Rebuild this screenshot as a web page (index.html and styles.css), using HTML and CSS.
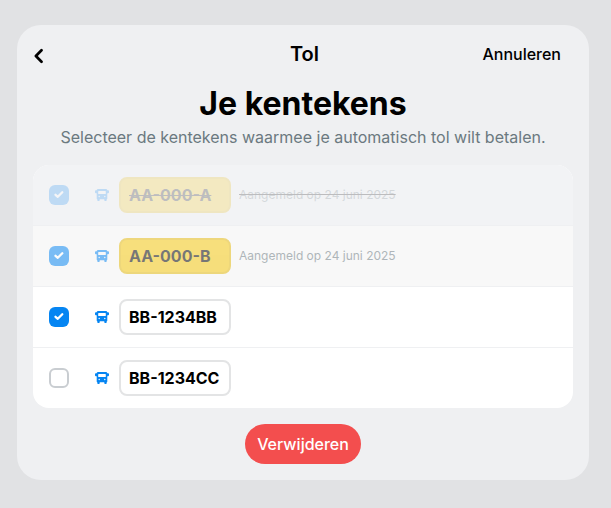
FILE: index.html
```html
<!DOCTYPE html>
<html lang="nl">
<head>
<meta charset="utf-8">
<title>Tol</title>
<link rel="stylesheet" href="styles.css">
</head>
<body>
<svg class="defs" aria-hidden="true">
  <symbol id="bus" viewBox="0 0 14 12">
    <path fill-rule="evenodd" d="M3.300 0h7.400Q12.300 0 12.300 1.200h.8q.9 0 .9.900v1.200q0 .9-.9.900h-.8V9.500q0 .7-.6.700v1q0 .8-.8.800h-.8q-.8 0-.8-.8v-1H4.700v1q0 .8-.8.800h-.8q-.8 0-.8-.8v-1q-.6 0-.6-.7V4.200H.9q-.9 0-.9-.9V2.100q0-.9.900-.9h.8Q1.700 0 3.300 0ZM3.700 1.900q-.5 0-.5.500v2q0 .5.500.5h6.600q.5 0 .5-.5v-2q0-.5-.5-.5ZM4.200 6.800a.7.700 0 1 0 0 1.400.7.700 0 0 0 0-1.400Zm5.600 0a.7.700 0 1 0 0 1.400.7.700 0 0 0 0-1.400Z"/>
  </symbol>
  <symbol id="check" viewBox="0 0 20 20">
    <path d="M6.500 9.800 8.800 11.800 13.300 7.300" fill="none" stroke="#fff" stroke-width="2.300" stroke-linecap="round" stroke-linejoin="round"/>
  </symbol>
</svg>
<main class="sheet">
  <header class="bar">
    <button class="back" aria-label="Terug"><svg viewBox="0 0 10 16"><path d="M8.500 2.300 2.900 8l5.600 5.700" fill="none" stroke="currentColor" stroke-width="2.700" stroke-linecap="round" stroke-linejoin="round"/></svg></button>
    <h2>Tol</h2>
    <button class="cancel">Annuleren</button>
  </header>
  <h1>Je kentekens</h1>
  <p class="intro">Selecteer de kentekens waarmee je automatisch tol wilt betalen.</p>
  <ul class="list">
    <li class="row removed">
      <div class="content"><span class="box checked"><svg><use href="#check"/></svg></span><svg class="bus"><use href="#bus"/></svg><span class="plate yellow">AA-000-A</span><span class="date">Aangemeld op 24 juni 2025</span></div>
    </li>
    <li class="row pending">
      <div class="content"><span class="box checked"><svg><use href="#check"/></svg></span><svg class="bus"><use href="#bus"/></svg><span class="plate yellow">AA-000-B</span><span class="date">Aangemeld op 24 juni 2025</span></div>
    </li>
    <li class="row">
      <div class="content"><span class="box checked"><svg><use href="#check"/></svg></span><svg class="bus"><use href="#bus"/></svg><span class="plate">BB-1234BB</span></div>
    </li>
    <li class="row">
      <div class="content"><span class="box"></span><svg class="bus"><use href="#bus"/></svg><span class="plate">BB-1234CC</span></div>
    </li>
  </ul>
  <button class="delete">Verwijderen</button>
</main>
</body>
</html>
```
FILE: styles.css
```css
* { box-sizing: border-box; }
body { margin: 0; height: 508px; padding: 25px 22px 28px 17px; background: #e1e2e4; font-family: Inter, "Liberation Sans", sans-serif; color: #000; overflow: hidden; }
.defs { display: none; }
button { border: 0; padding: 0; background: none; font: inherit; color: inherit; }
h1, h2, p, ul { margin: 0; padding: 0; }
.sheet { height: 455px; padding: 0 16px; border-radius: 24px; background: #eff0f2; display: flex; flex-direction: column; align-items: center; }
.bar { width: 100%; height: 58px; display: grid; grid-template-columns: 1fr auto 1fr; align-items: center; padding-right: 12px; }
.back { justify-self: start; width: 10px; height: 16px; margin-top: 4px; }
.back svg { display: block; width: 10px; height: 16px; }
h2 { font-size: 20px; font-weight: 600; line-height: 24px; padding-left: 15px; }
.cancel { justify-self: end; font-size: 16px; font-weight: 500; line-height: 24px; }
h1 { font-size: 32px; font-weight: 700; line-height: 40px; margin-top: 1px; }
.intro { font-size: 16px; line-height: 24px; margin-top: 1px; color: #6b7980; white-space: nowrap; }
.list { list-style: none; width: 540px; margin-top: 16px; border-radius: 16px; overflow: hidden; background: #fff; }
.row { height: 61px; border-bottom: 1px solid #eff0f2; }
.row:last-child { height: 60px; border-bottom: 0; }
.content { height: 60px; display: flex; align-items: center; padding-left: 16px; }
.removed { background: #f2f3f5; }
.removed .content { opacity: .22; }
.pending { background: #f8f8f8; }
.pending .content { opacity: .52; }
.box { width: 20px; height: 20px; border-radius: 6px; border: 2px solid #c9cdd1; }
.checked { border: 0; background: #0585f2; }
.box svg { display: block; width: 20px; height: 20px; }
.bus { width: 14px; height: 12px; margin: 0 10px 0 26px; fill: #0585f2; }
.plate { width: 112px; height: 36px; border: 2px solid #e3e4e5; border-radius: 8px; padding-left: 8px; font-size: 16px; font-weight: 700; line-height: 32px; background: #fff; }
.yellow { background: #f6c70b; border-color: #e4b90b; }
.date { margin-left: 8px; font-size: 12px; line-height: 18px; color: #6b7980; }
.removed .plate, .removed .date { text-decoration: line-through; }
.removed .date { text-decoration-color: #000; }
.delete { margin-top: 16px; width: 116px; height: 40px; border-radius: 20px; background: #f34e4e; color: #fff; font-size: 16px; font-weight: 500; line-height: 40px; }
```
